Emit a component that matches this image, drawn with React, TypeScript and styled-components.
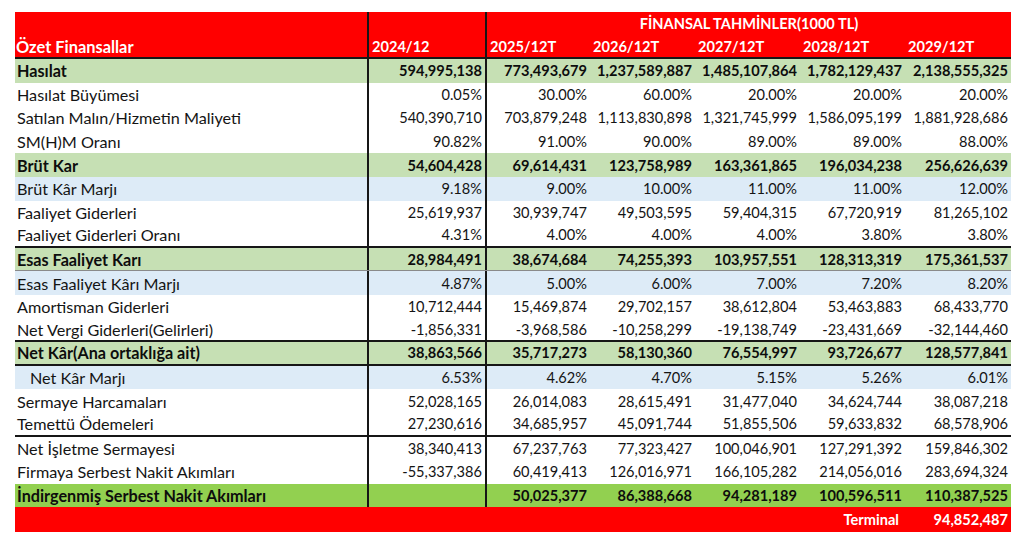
import React from "react";
import styled, { createGlobalStyle, css } from "styled-components";

const Global = createGlobalStyle`
  html, body { margin: 0; padding: 0; background: #ffffff; }
  body { font-family: "Lato", "Open Sans", sans-serif; }
`;

type Kind = "plain" | "total" | "margin" | "discounted";
type Rule = "none" | "dark" | "gray";

interface RowData {
  label: string;
  kind?: Kind;
  rule?: Rule;
  indent?: boolean;
  vals: string[];
}

const rows: RowData[] = [
  { label: "Hasılat", kind: "total", vals: ["594,995,138", "773,493,679", "1,237,589,887", "1,485,107,864", "1,782,129,437", "2,138,555,325"] },
  { label: "Hasılat Büyümesi", vals: ["0.05%", "30.00%", "60.00%", "20.00%", "20.00%", "20.00%"] },
  { label: "Satılan Malın/Hizmetin Maliyeti", vals: ["540,390,710", "703,879,248", "1,113,830,898", "1,321,745,999", "1,586,095,199", "1,881,928,686"] },
  { label: "SM(H)M Oranı", vals: ["90.82%", "91.00%", "90.00%", "89.00%", "89.00%", "88.00%"] },
  { label: "Brüt Kar", kind: "total", vals: ["54,604,428", "69,614,431", "123,758,989", "163,361,865", "196,034,238", "256,626,639"] },
  { label: "Brüt Kâr Marjı", kind: "margin", vals: ["9.18%", "9.00%", "10.00%", "11.00%", "11.00%", "12.00%"] },
  { label: "Faaliyet Giderleri", vals: ["25,619,937", "30,939,747", "49,503,595", "59,404,315", "67,720,919", "81,265,102"] },
  { label: "Faaliyet Giderleri Oranı", rule: "dark", vals: ["4.31%", "4.00%", "4.00%", "4.00%", "3.80%", "3.80%"] },
  { label: "Esas Faaliyet Karı", kind: "total", rule: "gray", vals: ["28,984,491", "38,674,684", "74,255,393", "103,957,551", "128,313,319", "175,361,537"] },
  { label: "Esas Faaliyet Kârı Marjı", kind: "margin", vals: ["4.87%", "5.00%", "6.00%", "7.00%", "7.20%", "8.20%"] },
  { label: "Amortisman Giderleri", vals: ["10,712,444", "15,469,874", "29,702,157", "38,612,804", "53,463,883", "68,433,770"] },
  { label: "Net Vergi Giderleri(Gelirleri)", rule: "dark", vals: ["-1,856,331", "-3,968,586", "-10,258,299", "-19,138,749", "-23,431,669", "-32,144,460"] },
  { label: "Net Kâr(Ana ortaklığa ait)", kind: "total", rule: "dark", vals: ["38,863,566", "35,717,273", "58,130,360", "76,554,997", "93,726,677", "128,577,841"] },
  { label: "Net Kâr Marjı", kind: "margin", indent: true, vals: ["6.53%", "4.62%", "4.70%", "5.15%", "5.26%", "6.01%"] },
  { label: "Sermaye Harcamaları", vals: ["52,028,165", "26,014,083", "28,615,491", "31,477,040", "34,624,744", "38,087,218"] },
  { label: "Temettü Ödemeleri", rule: "dark", vals: ["27,230,616", "34,685,957", "45,091,744", "51,855,506", "59,633,832", "68,578,906"] },
  { label: "Net İşletme Sermayesi", vals: ["38,340,413", "67,237,763", "77,323,427", "100,046,901", "127,291,392", "159,846,302"] },
  { label: "Firmaya Serbest Nakit Akımları", vals: ["-55,337,386", "60,419,413", "126,016,971", "166,105,282", "214,056,016", "283,694,324"] },
  { label: "İndirgenmiş Serbest Nakit Akımları", kind: "discounted", vals: ["", "50,025,377", "86,388,668", "94,281,189", "100,596,511", "110,387,525"] },
];

const years = ["2025/12T", "2026/12T", "2027/12T", "2028/12T", "2029/12T"];

const COLS = "352px 118px 105px 105px 105px 105px 106px";
const LINE = "#161616";

const Page = styled.div`
  padding: 12px 0 0 15px;
  width: 996px;
`;

const Table = styled.div`
  display: flex;
  flex-direction: column;
  width: 996px;
  font-family: "Lato", "Open Sans", sans-serif;
  font-size: 14.6px;
  color: #141414;
`;

const Header = styled.div`
  display: grid;
  grid-template-columns: ${COLS};
  grid-template-rows: 23px 22px;
  background: #ff0000;
  color: #ffffff;
  font-weight: 700;
  border-bottom: 2px solid ${LINE};
`;

const HeadCell = styled.div<{ $divider?: boolean; $span?: string; $center?: boolean; $label?: boolean }>`
  display: flex;
  align-items: center;
  justify-content: ${(p) => (p.$center ? "center" : "flex-start")};
  padding: 0 3px;
  white-space: nowrap;
  ${(p) => p.$label && css`font-size: 16.4px; padding-left: 1px;`}
  ${(p) => p.$span && css`grid-column: ${p.$span};`}
  ${(p) => p.$divider && css`border-left: 2px solid ${LINE};`}
`;

const bg: Record<Kind, string> = {
  plain: "#ffffff",
  total: "#c6e0b4",
  margin: "#ddebf7",
  discounted: "#92d050",
};

const Row = styled.div<{ $kind: Kind; $rule: Rule }>`
  display: grid;
  grid-template-columns: ${COLS};
  height: 23.6px;
  box-sizing: border-box;
  background: ${(p) => bg[p.$kind]};
  font-weight: ${(p) => (p.$kind === "total" || p.$kind === "discounted" ? 700 : 400)};
  color: ${(p) => (p.$kind === "total" || p.$kind === "discounted" ? "#0d0d0d" : "#141414")};
  ${(p) =>
    p.$rule === "dark" &&
    css`
      border-bottom: 2px solid ${LINE};
    `}
  ${(p) =>
    p.$rule === "gray" &&
    css`
      border-bottom: 1px solid #8a8a8a;
    `}
`;

const Label = styled.div<{ $indent?: boolean }>`
  display: flex;
  align-items: center;
  font-size: 16.2px;
  padding-left: ${(p) => (p.$indent ? "15px" : "2px")};
  white-space: nowrap;
`;

const Value = styled.div<{ $divider?: boolean }>`
  display: flex;
  align-items: center;
  justify-content: flex-end;
  padding-right: 3px;
  white-space: nowrap;
  ${(p) => p.$divider && css`border-left: 2px solid ${LINE};`}
`;

const TerminalRow = styled.div`
  display: grid;
  grid-template-columns: ${COLS};
  height: 25px;
  background: #ff0000;
  color: #ffffff;
  font-weight: 700;
`;

const TerminalLabel = styled.div`
  grid-column: 6;
  display: flex;
  align-items: center;
  justify-content: flex-end;
  padding-right: 6px;
`;

const TerminalValue = styled.div`
  grid-column: 7;
  display: flex;
  align-items: center;
  justify-content: flex-end;
  padding-right: 3px;
`;

export default function App() {
  return (
    <Page>
      <Global />
      <Table>
        <Header>
          <HeadCell />
          <HeadCell $divider />
          <HeadCell $divider $span="3 / 8" $center>
            FİNANSAL TAHMİNLER(1000 TL)
          </HeadCell>
          <HeadCell $label>Özet Finansallar</HeadCell>
          <HeadCell $divider>2024/12</HeadCell>
          {years.map((y, i) => (
            <HeadCell key={y} $divider={i === 0}>
              {y}
            </HeadCell>
          ))}
        </Header>
        {rows.map((r) => (
          <Row key={r.label} $kind={r.kind ?? "plain"} $rule={r.rule ?? "none"}>
            <Label $indent={r.indent}>{r.label}</Label>
            {r.vals.map((v, i) => (
              <Value key={i} $divider={i < 2}>
                {v}
              </Value>
            ))}
          </Row>
        ))}
        <TerminalRow>
          <TerminalLabel>Terminal</TerminalLabel>
          <TerminalValue>94,852,487</TerminalValue>
        </TerminalRow>
      </Table>
    </Page>
  );
}
